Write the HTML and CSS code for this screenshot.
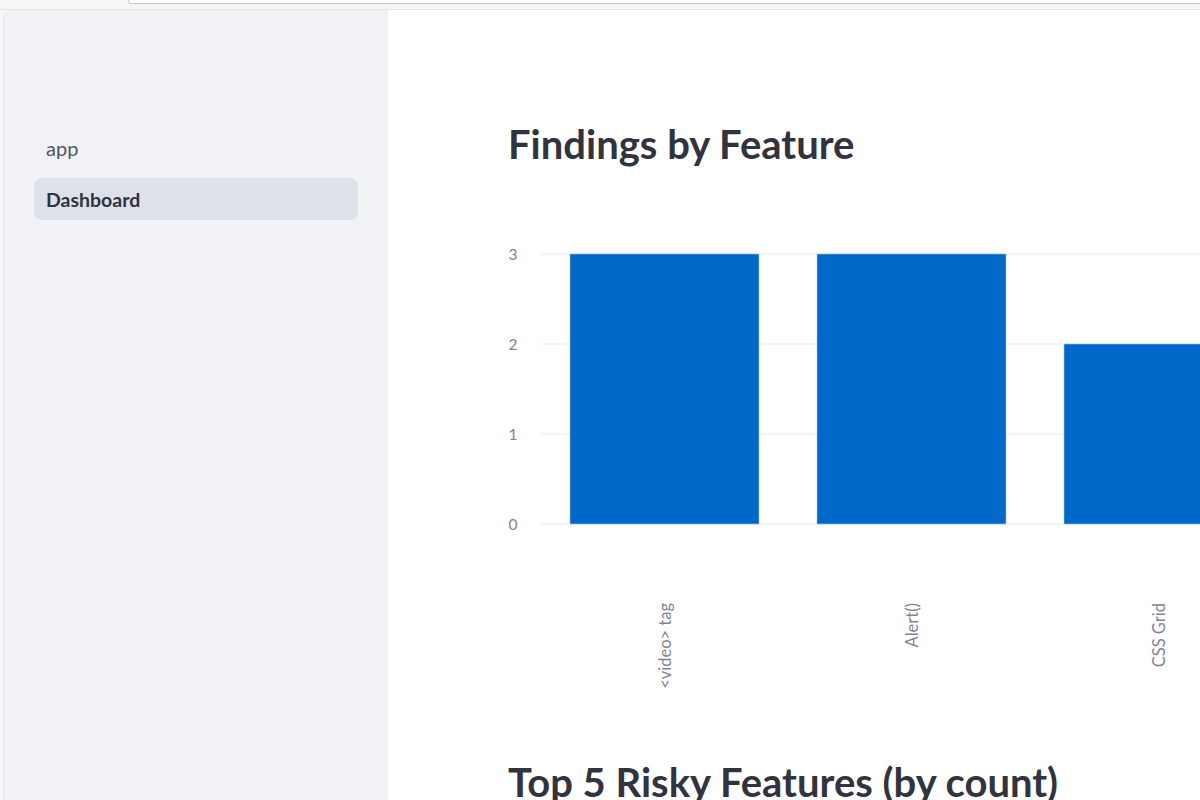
FILE: index.html
```html
<!DOCTYPE html>
<html>
<head>
<meta charset="utf-8">
<link rel="stylesheet" href="styles.css">
</head>
<body>
<div class="chrome">
  <div class="chrome-tab"></div>
</div>
<div class="frame">
  <aside class="sidebar">
    <nav class="nav">
      <a class="nav-item">app</a>
      <a class="nav-item active">Dashboard</a>
    </nav>
  </aside>
  <main class="main">
    <h1 class="title">Findings by Feature</h1>
    <div class="chart">
      <svg width="720" height="500" viewBox="0 0 720 500" class="chart-svg">
        <g class="grid">
          <line x1="41" y1="24" x2="720" y2="24"/>
          <line x1="41" y1="114" x2="720" y2="114"/>
          <line x1="41" y1="204" x2="720" y2="204"/>
          <line x1="41" y1="294" x2="720" y2="294"/>
        </g>
        <g class="ylabels">
          <text x="13" y="24">3</text>
          <text x="13" y="114">2</text>
          <text x="13" y="204">1</text>
          <text x="13" y="294">0</text>
        </g>
        <g class="bars">
          <rect x="70" y="24" width="189" height="270"/>
          <rect x="317" y="24" width="189" height="270"/>
          <rect x="564" y="114" width="189" height="180"/>
        </g>
        <g class="xlabels">
          <text transform="translate(165 373) rotate(-90)">&lt;video&gt; tag</text>
          <text transform="translate(412 373) rotate(-90)">Alert()</text>
          <text transform="translate(659 373) rotate(-90)">CSS Grid</text>
        </g>
      </svg>
    </div>
    <h2 class="title subtitle">Top 5 Risky Features (by count)</h2>
  </main>
</div>
</body>
</html>
```

FILE: styles.css
```css
html, body {
  margin: 0;
  padding: 0;
  height: 100%;
  overflow: hidden;
}
body {
  background: #f7f7f8;
  font-family: "Source Sans Pro", Lato, "Noto Sans", sans-serif;
  color: #31333f;
  display: flex;
  flex-direction: column;
}
.chrome {
  flex: none;
  border-bottom: 1px solid #e4e4e6;
  box-sizing: border-box;
  height: 10px;
}
.chrome-tab {
  margin-left: 128px;
  height: 3px;
  background: #ffffff;
  border-left: 1px solid #c9c9cc;
  border-bottom: 1px solid #c9c9cc;
  border-bottom-left-radius: 8px;
}
.frame {
  flex: 1;
  display: flex;
  margin-left: 3px;
  border-left: 1px solid #e3e4e8;
  border-top-left-radius: 8px;
  overflow: hidden;
  background: #ffffff;
}
.sidebar {
  width: 384px;
  flex: none;
  background: #f0f2f6;
  padding-top: 118px;
  box-sizing: border-box;
}
.nav {
  display: flex;
  flex-direction: column;
  padding: 0 30px;
}
.nav-item {
  display: flex;
  align-items: center;
  height: 40px;
  padding: 0 12px;
  border-radius: 8px;
  font-size: 20px;
  color: #505463;
}
.nav-item.active {
  background: #dde1ea;
  font-weight: 700;
  color: #31333f;
  height: 42px;
  margin-top: 10px;
  font-size: 19.5px;
}
.main {
  flex: 1;
  padding-left: 120px;
  padding-top: 108px;
  overflow: hidden;
}
.title {
  margin: 0;
  font-size: 40px;
  font-weight: 700;
  line-height: 52px;
  color: #31333f;
  white-space: nowrap;
}
.chart {
  margin-left: -8px;
  margin-top: 60px;
  height: 526px;
}
.chart-svg {
  display: block;
  overflow: visible;
}
.grid line {
  stroke: #e6e9ef;
  stroke-width: 1;
}
.ylabels text {
  font-size: 15.5px;
  fill: #808495;
  text-anchor: middle;
  dominant-baseline: central;
}
.bars rect {
  fill: #0068c9;
  stroke: #9cc3ea;
  stroke-width: 0.6;
}
.xlabels text {
  font-size: 16.5px;
  fill: #808495;
  text-anchor: end;
  dominant-baseline: central;
}
.subtitle {
  margin-top: 0;
}
```
